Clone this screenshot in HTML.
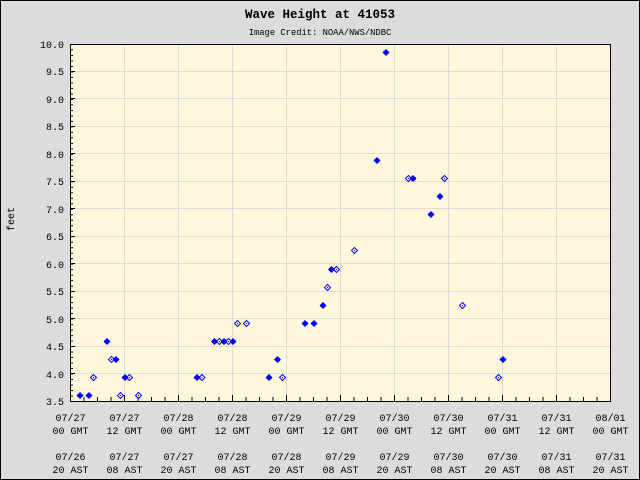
<!DOCTYPE html>
<html><head><style>
html,body{margin:0;padding:0;background:#dcdcdc;}
svg{display:block;}
text{font-family:"Liberation Mono","DejaVu Sans Mono",monospace;fill:#000;}
</style></head><body>
<svg width="640" height="480" xmlns="http://www.w3.org/2000/svg">
<defs>
<pattern id="yt" x="0" y="44" width="6" height="5.4923" patternUnits="userSpaceOnUse"><rect x="0" y="0" width="6" height="1" fill="#000"/></pattern>
<pattern id="xt" x="70" y="0" width="13.5" height="6" patternUnits="userSpaceOnUse"><rect x="0" y="0" width="1" height="6" fill="#000"/></pattern>
<g id="f"><polygon points="0,-3.5 3.5,0 0,3.5 -3.5,0" fill="#0000ff"/><rect x="-2.5" y="-1.5" width="5" height="3" fill="#0000ff"/></g>
<g id="h"><polygon points="0,-3 3,0 0,3 -3,0" fill="none" stroke="#0000ff" stroke-width="1"/><rect x="-0.5" y="-0.5" width="1" height="1" fill="#0000ff"/></g>
</defs>
<rect x="0.5" y="0.5" width="639" height="479" fill="#dcdcdc" stroke="#000"/>
<text x="320" y="18" font-size="12.5" font-weight="bold" text-anchor="middle">Wave Height at 41053</text>
<text x="320" y="35" font-size="8.8" text-anchor="middle">Image Credit: NOAA/NWS/NDBC</text>
<rect x="70" y="44" width="540" height="357" fill="#fff8dc"/>
<g stroke="#dcdcdc" stroke-width="1">
<path d="M70 71.5H610M70 98.5H610M70 126.5H610M70 153.5H610M70 181.5H610M70 208.5H610M70 236.5H610M70 263.5H610M70 291.5H610M70 318.5H610M70 346.5H610M70 373.5H610"/>
<path d="M124.5 44V401M178.5 44V401M232.5 44V401M286.5 44V401M340.5 44V401M394.5 44V401M448.5 44V401M502.5 44V401M556.5 44V401"/>
</g>
<rect x="70" y="44" width="3" height="357" fill="url(#yt)"/>
<rect x="70" y="397" width="540" height="4" fill="url(#xt)"/>
<g stroke="#000" stroke-width="1">
<path d="M70 44.5H75M70 71.5H75M70 98.5H75M70 126.5H75M70 153.5H75M70 181.5H75M70 208.5H75M70 236.5H75M70 263.5H75M70 291.5H75M70 318.5H75M70 346.5H75M70 373.5H75"/>
<path d="M124.5 401V395M178.5 401V395M232.5 401V395M286.5 401V395M340.5 401V395M394.5 401V395M448.5 401V395M502.5 401V395M556.5 401V395"/>
</g>
<rect x="70.5" y="44.5" width="540" height="357" fill="none" stroke="#000"/>
<g font-size="10" text-anchor="end">
<text x="64" y="48">10.0</text><text x="64" y="75">9.5</text><text x="64" y="103">9.0</text><text x="64" y="130">8.5</text><text x="64" y="158">8.0</text><text x="64" y="185">7.5</text><text x="64" y="213">7.0</text><text x="64" y="240">6.5</text><text x="64" y="268">6.0</text><text x="64" y="295">5.5</text><text x="64" y="323">5.0</text><text x="64" y="350">4.5</text><text x="64" y="378">4.0</text><text x="64" y="405">3.5</text>
</g>
<text x="18" y="223" font-size="10" text-anchor="middle" transform="rotate(-90 14 223)">feet</text>
<g font-size="10" text-anchor="middle">
<g transform="translate(70.5,0)"><text y="421">07/27</text><text y="434">00 GMT</text><text y="460">07/26</text><text y="473">20 AST</text></g>
<g transform="translate(124.5,0)"><text y="421">07/27</text><text y="434">12 GMT</text><text y="460">07/27</text><text y="473">08 AST</text></g>
<g transform="translate(178.5,0)"><text y="421">07/28</text><text y="434">00 GMT</text><text y="460">07/27</text><text y="473">20 AST</text></g>
<g transform="translate(232.5,0)"><text y="421">07/28</text><text y="434">12 GMT</text><text y="460">07/28</text><text y="473">08 AST</text></g>
<g transform="translate(286.5,0)"><text y="421">07/29</text><text y="434">00 GMT</text><text y="460">07/28</text><text y="473">20 AST</text></g>
<g transform="translate(340.5,0)"><text y="421">07/29</text><text y="434">12 GMT</text><text y="460">07/29</text><text y="473">08 AST</text></g>
<g transform="translate(394.5,0)"><text y="421">07/30</text><text y="434">00 GMT</text><text y="460">07/29</text><text y="473">20 AST</text></g>
<g transform="translate(448.5,0)"><text y="421">07/30</text><text y="434">12 GMT</text><text y="460">07/30</text><text y="473">08 AST</text></g>
<g transform="translate(502.5,0)"><text y="421">07/31</text><text y="434">00 GMT</text><text y="460">07/30</text><text y="473">20 AST</text></g>
<g transform="translate(556.5,0)"><text y="421">07/31</text><text y="434">12 GMT</text><text y="460">07/31</text><text y="473">08 AST</text></g>
<g transform="translate(610.5,0)"><text y="421">08/01</text><text y="434">00 GMT</text><text y="460">07/31</text><text y="473">20 AST</text></g>
</g>
<g>
<use href="#f" x="80" y="395.5"/><use href="#f" x="89" y="395.5"/><use href="#h" x="93.5" y="377.5"/>
<use href="#f" x="107" y="341.5"/><use href="#h" x="111.5" y="359.5"/><use href="#f" x="116" y="359.5"/>
<use href="#h" x="120.5" y="395.5"/><use href="#f" x="125" y="377.5"/><use href="#h" x="129.5" y="377.5"/><use href="#h" x="138.5" y="395.5"/>
<use href="#f" x="197" y="377.5"/><use href="#h" x="202" y="377.5"/>
<use href="#f" x="214.5" y="341.5"/><use href="#h" x="219.5" y="341.5"/><use href="#f" x="224" y="341.5"/><use href="#h" x="228.5" y="341.5"/><use href="#f" x="233" y="341.5"/>
<use href="#h" x="237.5" y="323.5"/><use href="#h" x="246.5" y="323.5"/>
<use href="#f" x="269" y="377.5"/><use href="#f" x="277.5" y="359.5"/><use href="#h" x="282.5" y="377.5"/>
<use href="#f" x="305" y="323.5"/><use href="#f" x="314" y="323.5"/><use href="#f" x="323" y="305.5"/>
<use href="#h" x="327.5" y="287.5"/><use href="#f" x="331.5" y="269.5"/><use href="#h" x="336.5" y="269.5"/>
<use href="#h" x="354.5" y="250.5"/><use href="#f" x="377" y="160.5"/><use href="#f" x="386" y="52.5"/>
<use href="#h" x="408.5" y="178.5"/><use href="#f" x="413" y="178.5"/><use href="#h" x="444.5" y="178.5"/>
<use href="#f" x="440" y="196.5"/><use href="#f" x="431" y="214.5"/><use href="#h" x="462.5" y="305.5"/>
<use href="#h" x="498.5" y="377.5"/><use href="#f" x="503" y="359.5"/>
</g>
</svg>
</body></html>
